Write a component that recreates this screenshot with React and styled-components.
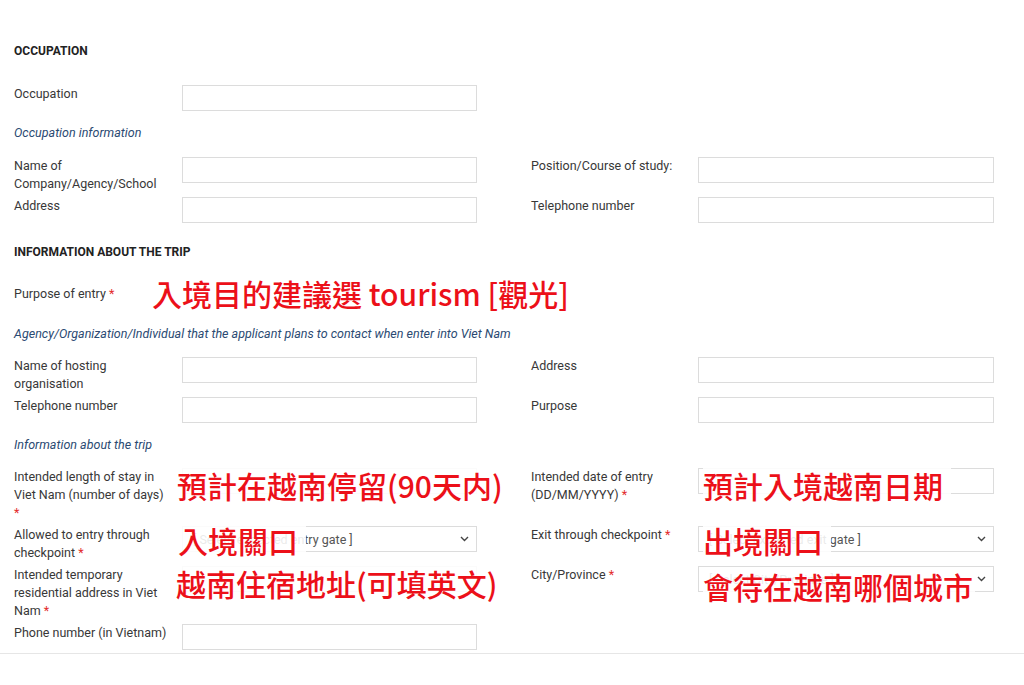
import React from 'react'
import styled, { createGlobalStyle } from 'styled-components'

const GlobalStyle = createGlobalStyle`
  html, body {
    margin: 0;
    padding: 0;
    background: #ffffff;
  }
  body {
    font-family: Roboto, "Liberation Sans", Arial, sans-serif;
    color: #333333;
  }
`

const Page = styled.div`
  width: 1024px;
  height: 685px;
  background: #ffffff;
  overflow: hidden;
`

const Form = styled.div`
  display: flex;
  flex-direction: column;
  padding: 42px 30px 0 14px;
`

const SectionTitle = styled.h3`
  margin: ${props => props.$first ? '0' : '20px'} 0 ${props => props.$first ? '25px' : '24px'};
  font-size: 12px;
  font-weight: 700;
  line-height: 18px;
  color: #222222;
  text-transform: uppercase;
`

const SubTitle = styled.div`
  margin: ${props => props.$top}px 0 ${props => props.$bottom}px;
  font-size: 12.5px;
  font-style: italic;
  line-height: 18px;
  color: #2b4a72;
`

const Group = styled.div`
  display: flex;
  flex-direction: column;
  gap: 4px;
`

const Row = styled.div`
  display: grid;
  grid-template-columns: 168px 295px 54px 167px 296px;
  align-items: start;
`

const Label = styled.label`
  grid-column: ${props => props.$right ? 4 : 1};
  padding-right: 12px;
  font-size: 12.5px;
  line-height: 18px;
  color: #383838;
`

const Required = styled.span`
  color: #e32b2b;
`

const Control = styled.div`
  grid-column: ${props => props.$right ? 5 : 2};
  position: relative;
  height: 26px;
`

const Input = styled.input`
  display: block;
  width: 100%;
  height: 26px;
  box-sizing: border-box;
  margin: 0;
  border: 1px solid #dcdcdc;
  background: #ffffff;
  outline: none;
`

const SelectBox = styled.div`
  display: flex;
  align-items: center;
  justify-content: space-between;
  height: 26px;
  box-sizing: border-box;
  padding: 0 7px 0 10px;
  border: 1px solid #dcdcdc;
  background: #ffffff;
  font-size: 12.5px;
  color: #555555;
  white-space: nowrap;
`

const Annotation = styled.span`
  position: absolute;
  left: ${props => props.$dx}px;
  top: ${props => props.$dy}px;
  z-index: 2;
  padding-right: ${props => props.$pad ?? 8}px;
  white-space: nowrap;
  font-family: "Noto Sans CJK TC", "Noto Sans CJK SC", sans-serif;
  font-size: 30px;
  font-weight: 500;
  line-height: 34px;
  color: #ec1019;
  background: rgba(255, 255, 255, 0.88);
`

const Divider = styled.div`
  height: 1px;
  margin-top: 3px;
  background: #e6e6e6;
`

const Chevron = () => (
  <svg width="9" height="6" viewBox="0 0 9 6" fill="none">
    <path d="M1 1l3.5 3.5L8 1" stroke="#444" strokeWidth="1.4" />
  </svg>
)

const Select = ({ text }) => (
  <SelectBox>
    <span>{text}</span>
    <Chevron />
  </SelectBox>
)

const Req = () => <Required>*</Required>

const App = () => {
  return (
    <Page>
      <GlobalStyle />
      <Form>
        <SectionTitle $first>Occupation</SectionTitle>
        <Row>
          <Label>Occupation</Label>
          <Control><Input /></Control>
        </Row>

        <SubTitle $top={13} $bottom={15}>Occupation information</SubTitle>
        <Group>
          <Row>
            <Label>Name of Company/Agency/School</Label>
            <Control><Input /></Control>
            <Label $right>Position/Course of study:</Label>
            <Control $right><Input /></Control>
          </Row>
          <Row>
            <Label>Address</Label>
            <Control><Input /></Control>
            <Label $right>Telephone number</Label>
            <Control $right><Input /></Control>
          </Row>
        </Group>

        <SectionTitle>Information about the trip</SectionTitle>
        <Row>
          <Label>Purpose of entry <Req /></Label>
          <Control>
            <Annotation $dx={-30} $dy={-9}>入境目的建議選 tourism [觀光]</Annotation>
          </Control>
        </Row>

        <SubTitle $top={14} $bottom={14}>
          Agency/Organization/Individual that the applicant plans to contact when enter into Viet Nam
        </SubTitle>
        <Group>
          <Row>
            <Label>Name of hosting organisation</Label>
            <Control><Input /></Control>
            <Label $right>Address</Label>
            <Control $right><Input /></Control>
          </Row>
          <Row>
            <Label>Telephone number</Label>
            <Control><Input /></Control>
            <Label $right>Purpose</Label>
            <Control $right><Input /></Control>
          </Row>
        </Group>

        <SubTitle $top={13} $bottom={14}>Information about the trip</SubTitle>
        <Group>
          <Row>
            <Label>Intended length of stay in Viet Nam (number of days) <Req /></Label>
            <Control>
              <Input />
              <Annotation $dx={-5} $dy={0}>預計在越南停留(90天内)</Annotation>
            </Control>
            <Label $right>Intended date of entry (DD/MM/YYYY) <Req /></Label>
            <Control $right>
              <Input />
              <Annotation $dx={5} $dy={0}>預計入境越南日期</Annotation>
            </Control>
          </Row>
          <Row>
            <Label>Allowed to entry through checkpoint <Req /></Label>
            <Control>
              <Select text="[ Select expected entry gate ]" />
              <Annotation $dx={-4} $dy={-3}>入境關口</Annotation>
            </Control>
            <Label $right>Exit through checkpoint <Req /></Label>
            <Control $right>
              <Select text="[ Select expected exit gate ]" />
              <Annotation $dx={5} $dy={-3}>出境關口</Annotation>
            </Control>
          </Row>
          <Row>
            <Label>Intended temporary residential address in Viet Nam <Req /></Label>
            <Control>
              <Input />
              <Annotation $dx={-6} $dy={0}>越南住宿地址(可填英文)</Annotation>
            </Control>
            <Label $right>City/Province <Req /></Label>
            <Control $right>
              <Select text="[ Select City/Province ]" />
              <Annotation $dx={5} $dy={3} $pad={2}>會待在越南哪個城市</Annotation>
            </Control>
          </Row>
          <Row>
            <Label>Phone number (in Vietnam)</Label>
            <Control><Input /></Control>
          </Row>
        </Group>
      </Form>
      <Divider />
    </Page>
  )
}

export default App
